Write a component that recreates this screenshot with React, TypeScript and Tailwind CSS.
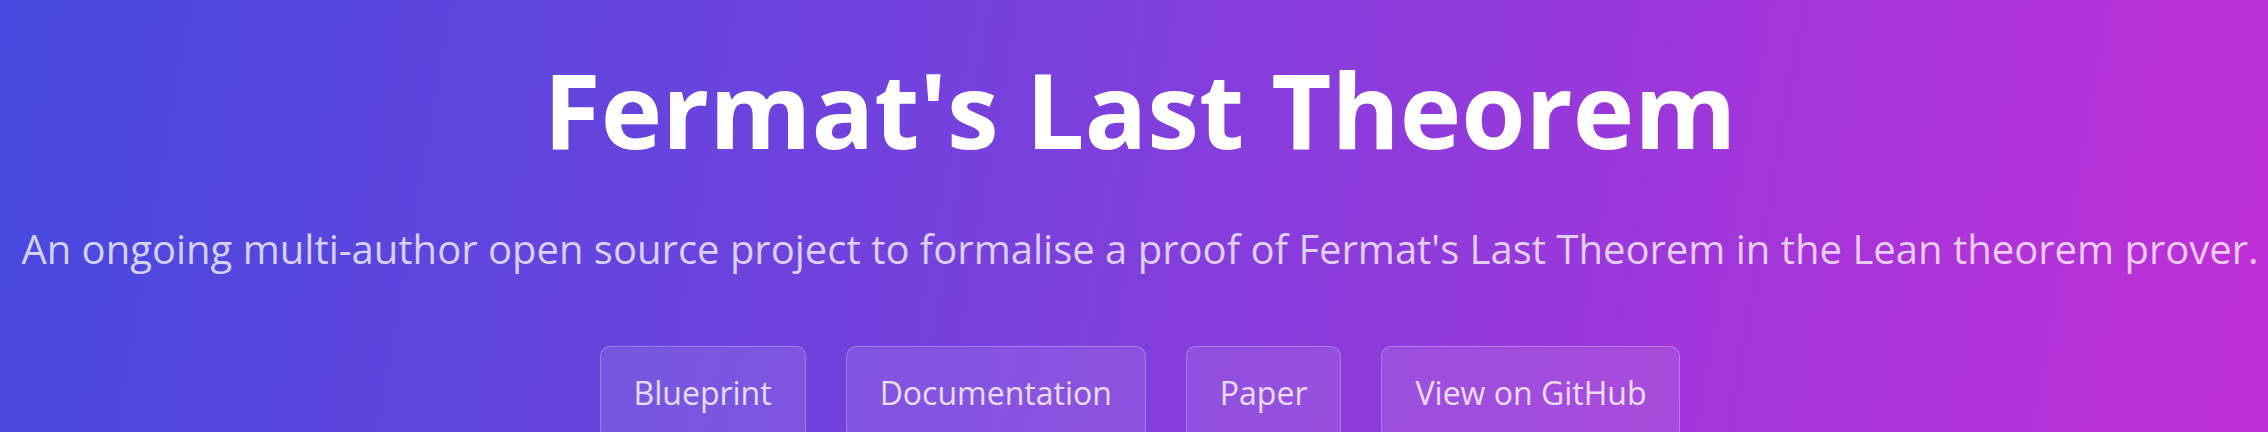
import React from "react";

const links = ["Blueprint", "Documentation", "Paper", "View on GitHub"];

export default function App() {
  return (
    <div
      className="min-h-[600px] w-full bg-[linear-gradient(100deg,#4749de_0%,#7a40dd_45%,#c22ed7_100%)] flex flex-col items-center pt-[57px] pl-[12px]"
      style={{ fontFamily: '"Open Sans", "Noto Sans", sans-serif' }}
    >
      <h1 className="text-[104px] leading-none font-bold text-white">Fermat's Last Theorem</h1>
      <p className="mt-[68px] text-[40px] leading-none text-white/75 whitespace-nowrap">
        An ongoing multi-author open source project to formalise a proof of Fermat's Last Theorem in the Lean theorem prover.
      </p>
      <div className="mt-[77px] flex gap-[40px]">
        {links.map((l) => (
          <a
            key={l}
            href="#"
            className="block rounded-[10px] border border-white/25 bg-white/10 px-[33px] pt-[30px] pb-[30px] text-[32px] leading-none text-white/80"
          >
            {l}
          </a>
        ))}
      </div>
    </div>
  );
}
